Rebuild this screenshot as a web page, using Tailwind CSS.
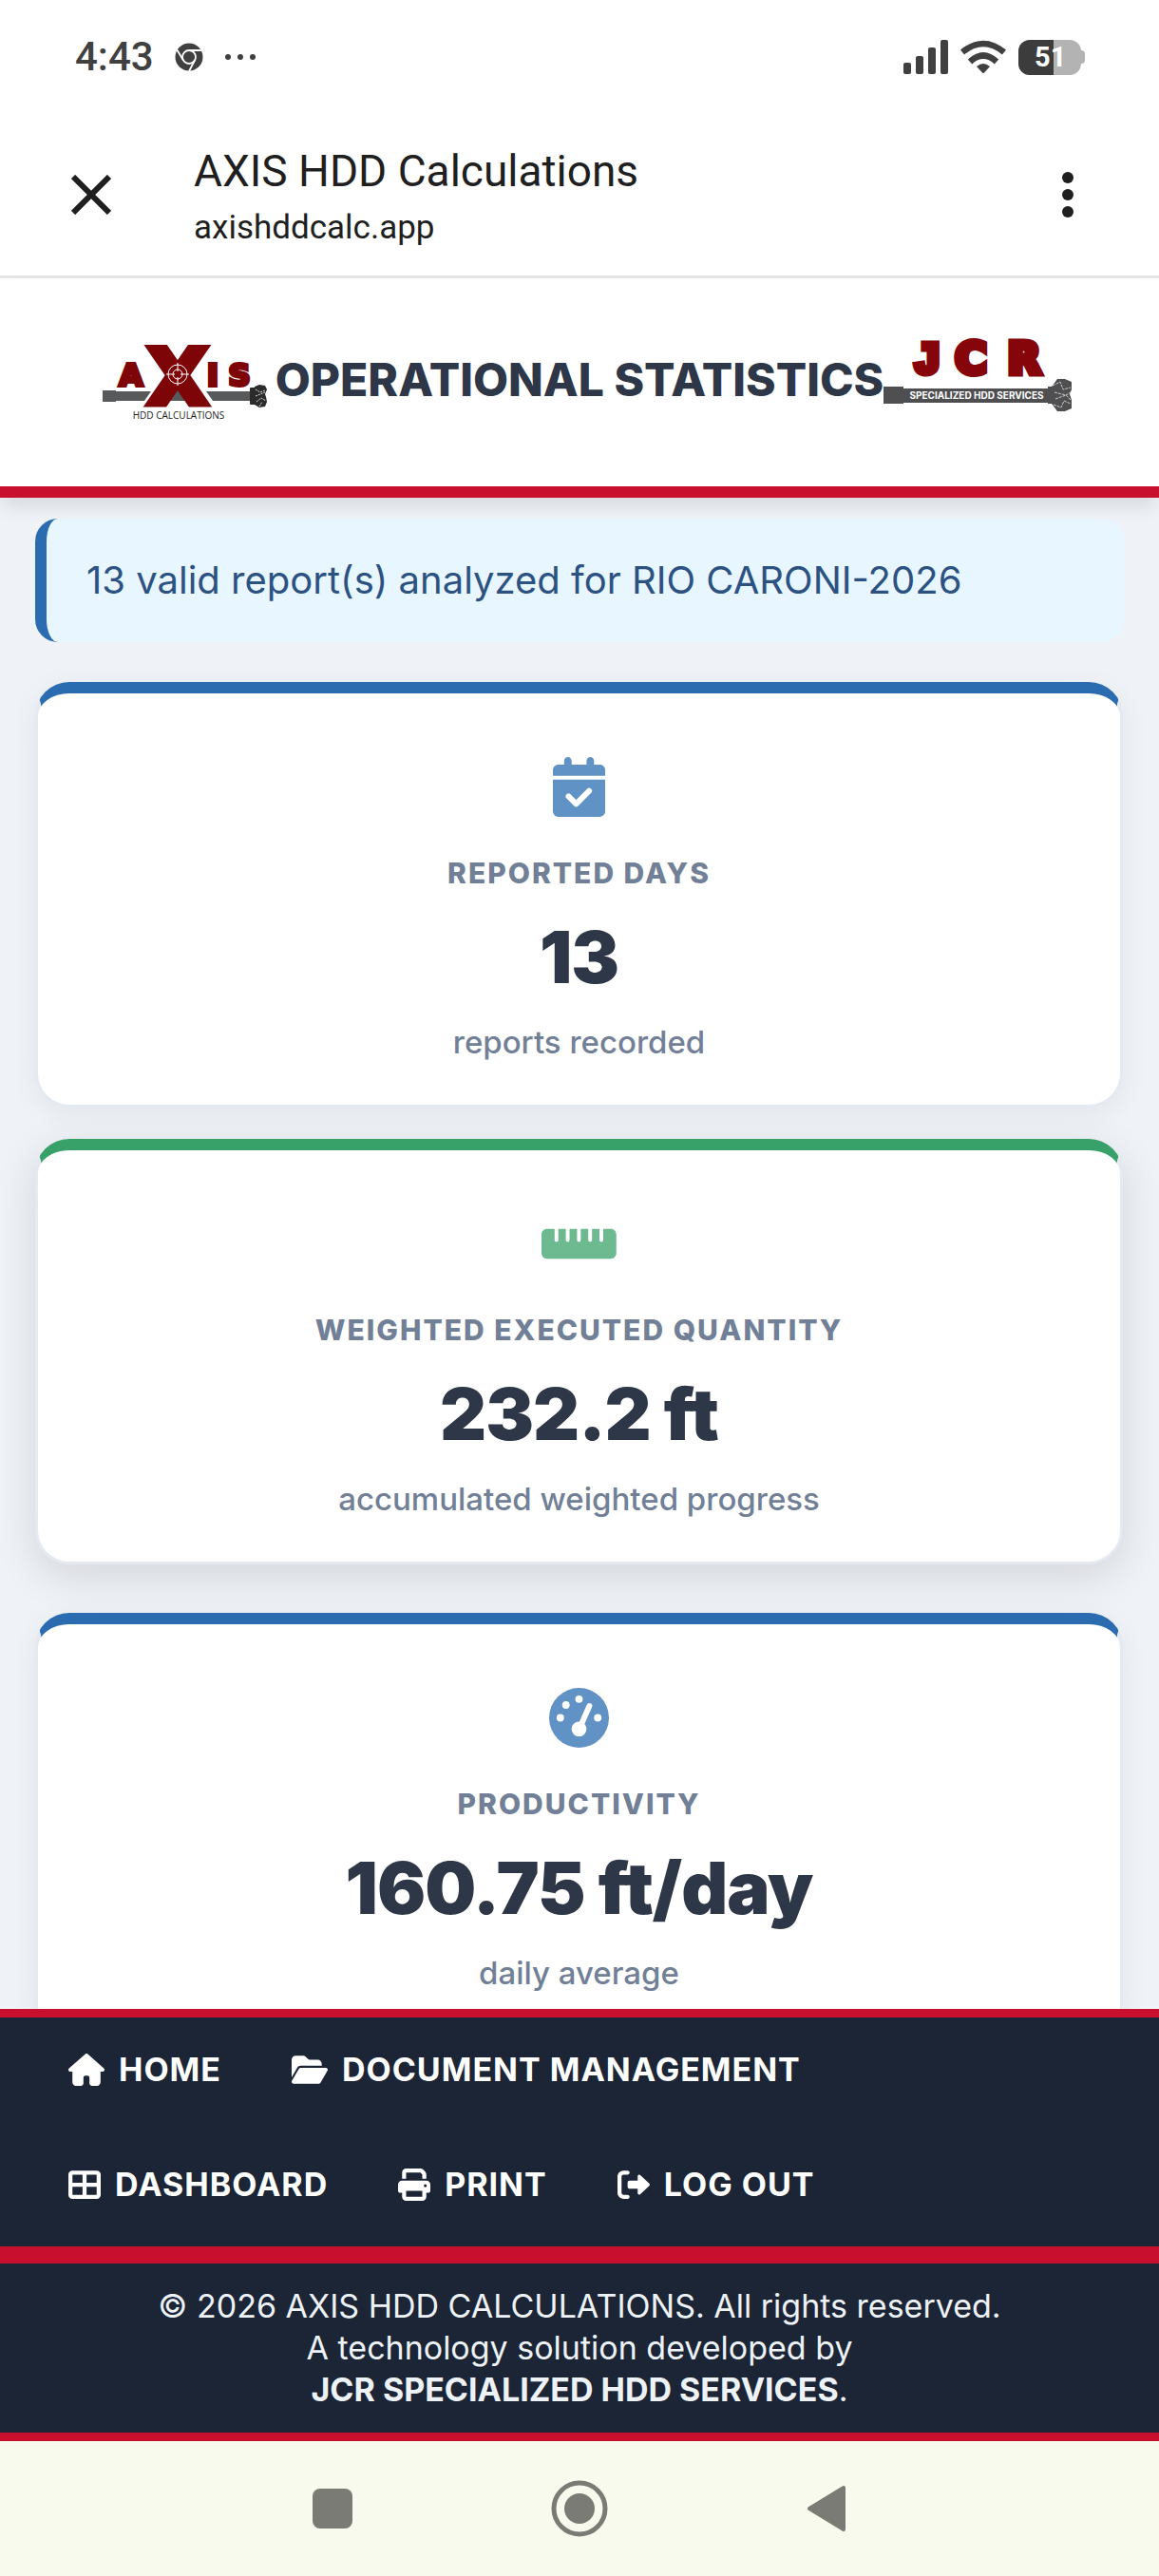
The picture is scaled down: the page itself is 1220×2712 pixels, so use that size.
<!DOCTYPE html>
<html lang="en">

<head>
    <meta charset="UTF-8">
    <meta name="viewport" content="width=device-width, initial-scale=1.0">
    <script src="https://cdn.jsdelivr.net/npm/@tailwindcss/browser@4"></script>
    <title>AXIS HDD Calculations</title>
</head>

<body class="flex h-screen flex-col overflow-hidden bg-[#eff2f7] font-['Inter',sans-serif] text-[#2d3748]">

    <!-- Status bar -->
    <div class="flex h-[120px] shrink-0 items-center justify-between bg-white pr-[78px] pl-[79px] font-['Roboto',sans-serif] text-[#404040]">
        <div class="flex items-center gap-[22px]">
            <span class="text-[42px] leading-none font-medium">4:43</span>
            <svg class="h-[30px] w-[30px]" viewBox="0 0 30 30">
                <circle cx="15" cy="15" r="14.5" fill="#404040"/>
                <g fill="none" stroke="#fff" stroke-width="1.8">
                    <circle cx="15" cy="15" r="7"/>
                    <path d="M15 8h14M9 18.5L2 7M21 18.5L15 30"/>
                </g>
            </svg>
            <svg class="h-[30px] w-[34px]" viewBox="0 0 34 30" fill="#404040">
                <circle cx="4" cy="15" r="3"/><circle cx="17" cy="15" r="3"/><circle cx="30" cy="15" r="3"/>
            </svg>
        </div>
        <div class="flex items-center gap-3">
            <svg class="h-[38px] w-[48px]" viewBox="0 0 48 38" fill="#404040">
                <rect x="1" y="25" width="8" height="12" rx="2"/>
                <rect x="14" y="18" width="8" height="19" rx="2"/>
                <rect x="27" y="9" width="8" height="28" rx="2"/>
                <rect x="40" y="1" width="8" height="36" rx="2"/>
            </svg>
            <svg class="h-[38px] w-[50px]" viewBox="0 0 50 38">
                <g fill="none" stroke="#404040" stroke-width="6.5">
                    <path d="M3 14Q25-4 47 14"/>
                    <path d="M11 24Q25 11 39 24"/>
                </g>
                <path d="M18 29q7-6 14 0l-6 6.500q-1 1-2 0z" fill="#404040"/>
            </svg>
            <div class="relative flex h-[37px] w-[70px] items-center">
                <div class="flex h-full w-[66px] overflow-hidden rounded-xl bg-[#b3b3b3]">
                    <div class="w-[37px] bg-[#3c3c3c]"></div>
                </div>
                <div class="h-[14px] w-1 rounded-r bg-[#b3b3b3]"></div>
                <span class="absolute inset-y-0 left-[17px] text-[29px] leading-[37px] font-bold text-white">51</span>
            </div>
        </div>
    </div>

    <!-- Browser tab bar -->
    <div class="flex h-[173px] shrink-0 items-center border-b-[3px] border-[#e6e6e6] bg-white pr-[84px] pl-[75px] font-['Roboto',sans-serif] text-[#1f1f1f]">
        <button type="button" aria-label="Close" class="h-[42px] w-[42px]">
            <svg viewBox="0 0 42 42" fill="none" stroke="#1f1f1f" stroke-width="6"><path d="M2 2l38 38M40 2L2 40"/></svg>
        </button>
        <div class="ml-[87px] flex flex-1 flex-col pt-[10px]">
            <span class="text-[46px] leading-[60px]">AXIS HDD Calculations</span>
            <span class="text-[35px] leading-[60px]">axishddcalc.app</span>
        </div>
        <button type="button" aria-label="More options" class="h-12 w-[24px]">
            <svg viewBox="0 0 24 48" fill="#1f1f1f"><circle cx="12" cy="6" r="6"/><circle cx="12" cy="24" r="6"/><circle cx="12" cy="42" r="6"/></svg>
        </button>
    </div>

    <!-- Page header -->
    <header class="relative z-10 flex h-[231px] shrink-0 items-center justify-center border-b-[12px] border-[#c8102e] bg-white pb-[5px] shadow-[0_12px_18px_-3px_rgba(0,0,0,0.1)]">
        <svg class="h-[120px] w-[200px]" viewBox="0 0 200 120" role="img" aria-label="AXIS HDD Calculations">
            <path d="M18 71h14v1h37l-7 10H32v1H18zM97 70l9 12H88zM127 72h48v10h-41z" fill="#58595b"/>
            <g fill="#2b2b2c">
                <rect x="173" y="68" width="6" height="18" rx="1"/>
                <path d="M178 67l5-2 6 1 2 4-2 5 1 3 1 5-2 5-6 1-5-3z"/>
            </g>
            <path d="M179 70l5 3 5-2M179 77l10-4M180 83l5-4 5 3M183 88l3-5" fill="none" stroke="#ddd" stroke-width="1" stroke-dasharray="2 1"/>
            <g fill="#7d0508" stroke="#7d0508" font-family="DejaVu Sans, sans-serif" font-weight="700" text-anchor="middle">
                <g font-size="32" stroke-width="4">
                    <text x="48" y="66">A</text>
                    <text x="134" y="66">I</text>
                    <text x="162" y="66">S</text>
                </g>
                <text x="97" y="85" font-size="81" stroke-width="7">X</text>
            </g>
            <g fill="none" stroke="#fff" stroke-width="1">
                <circle cx="97" cy="54" r="10"/><circle cx="97" cy="54" r="5"/>
                <path d="M97 42v9M97 57v9M85 54h9M100 54h9"/>
            </g>
            <text x="98" y="101" font-size="10" text-anchor="middle" font-family="Open Sans, sans-serif" fill="#222">HDD CALCULATIONS</text>
        </svg>
        <h1 class="text-[48px] leading-[60px] font-extrabold">OPERATIONAL STATISTICS</h1>
        <svg class="h-[120px] w-[200px]" viewBox="0 0 200 120" role="img" aria-label="JCR Specialized HDD Services">
            <g fill="#86050b" stroke="#86050b" stroke-width="7" font-size="45" font-family="DejaVu Sans, sans-serif" font-weight="700" text-anchor="middle">
                <text x="46" y="53" font-family="Liberation Sans, sans-serif">J</text>
                <text x="92" y="53">C</text>
                <text x="148" y="53">R</text>
            </g>
            <g fill="#4f4f51">
                <rect x="0" y="67" width="21" height="18"/>
                <rect x="20" y="69" width="155" height="15"/>
                <path d="M173 67h4l6-8 8 0 7 3v8l-2 5 2 6v9l-7 3h-8l-6-8h-4z"/>
            </g>
            <path d="M178 66l8-4 3 8 8-2M180 73l12 3 5-3M181 80l11-4 5 5M179 86l8 3 3-7 7 3" fill="none" stroke="#ccc" stroke-width="1" stroke-dasharray="3 1"/>
            <text x="98" y="80" font-size="10" font-weight="700" text-anchor="middle" font-family="Inter, sans-serif" fill="#fff">SPECIALIZED HDD SERVICES</text>
        </svg>
    </header>

    <!-- Statistics -->
    <main class="min-h-0 flex-1 overflow-hidden pt-[22px]">
        <p class="mr-[36px] ml-[37px] rounded-3xl border-l-[12px] border-[#2b6cb0] bg-[#e8f6ff] px-[42px] py-[35px] text-[40px] leading-[60px] text-[#2c5282]">13 valid report(s) analyzed for RIO CARONI-2026</p>

        <div class="mr-[38px] ml-[37px] mt-[42px] flex flex-col gap-[42px] text-center">
            <section class="flex flex-col items-center rounded-[36px] border-[3px] border-t-[12px] border-[#e5e9f1] border-t-[#2b6cb0] bg-white pt-[67px] pb-[46px] shadow-[0_6px_30px_rgba(0,0,0,0.06)]">
                <svg class="h-[63px] text-[#6092c5]" viewBox="0 0 448 512" fill="currentColor">
                    <path d="M128 0c17.700 0 32 14.300 32 32v32h128V32c0-17.700 14.300-32 32-32s32 14.300 32 32v32h48c26.500 0 48 21.500 48 48v48H0v-48c0-26.500 21.500-48 48-48h48V32c0-17.700 14.300-32 32-32zM0 192h448v272c0 26.500-21.500 48-48 48H48c-26.500 0-48-21.500-48-48z"/>
                    <path d="M134 336l65 65L310 290" fill="none" stroke="#fff" stroke-width="48" stroke-linecap="round" stroke-linejoin="round"/>
                </svg>
                <h2 class="mt-[41px] text-[30px] leading-[36px] font-extrabold tracking-[2px] text-[#718096]">REPORTED DAYS</h2>
                <p class="mt-7 text-[76px] leading-[84px] font-black tracking-[-1px]">13</p>
                <p class="mt-7 text-[33px] leading-[40px] font-medium text-[#718096]">reports recorded</p>
            </section>

            <section class="flex -translate-y-[9px] flex-col items-center rounded-[36px] border-[3px] border-t-[12px] border-[#e5e9f1] border-t-[#38a169] bg-white pt-[67px] pb-[46px] shadow-[0_12px_45px_rgba(0,0,0,0.12)]">
                <svg class="h-[63px] text-[#6db990]" viewBox="0 0 640 512" fill="currentColor">
                    <path d="M0 176c0-26.500 21.500-48 48-48h64v96a16 16 0 0 0 32 0v-96h64v96a16 16 0 0 0 32 0v-96h64v96a16 16 0 0 0 32 0v-96h64v96a16 16 0 0 0 32 0v-96h64v96a16 16 0 0 0 32 0v-96h64c26.500 0 48 21.500 48 48v160c0 26.500-21.500 48-48 48H48c-26.500 0-48-21.500-48-48z"/>
                </svg>
                <h2 class="mt-[41px] text-[30px] leading-[36px] font-extrabold tracking-[2px] text-[#718096]">WEIGHTED EXECUTED QUANTITY</h2>
                <p class="mt-7 text-[76px] leading-[84px] font-black tracking-[-1px]">232.2 ft</p>
                <p class="mt-7 text-[33px] leading-[40px] font-medium text-[#718096]">accumulated weighted progress</p>
            </section>

            <section class="flex flex-col items-center rounded-[36px] border-[3px] border-t-[12px] border-[#e5e9f1] border-t-[#2b6cb0] bg-white pt-[67px] pb-[46px] shadow-[0_6px_30px_rgba(0,0,0,0.06)]">
                <svg class="h-[63px] text-[#6092c5]" viewBox="0 0 512 512">
                    <circle cx="256" cy="256" r="256" fill="currentColor"/>
                    <g fill="#fff">
                        <circle cx="256" cy="96" r="32"/><circle cx="144" cy="146" r="32"/><circle cx="96" cy="256" r="32"/><circle cx="416" cy="256" r="32"/>
                        <circle cx="256" cy="352" r="64"/>
                    </g>
                    <path d="M265 335L345 154" stroke="#fff" stroke-width="48" stroke-linecap="round"/>
                </svg>
                <h2 class="mt-[41px] text-[30px] leading-[36px] font-extrabold tracking-[2px] text-[#718096]">PRODUCTIVITY</h2>
                <p class="mt-7 text-[76px] leading-[84px] font-black tracking-[-1px]">160.75 ft/day</p>
                <p class="mt-7 text-[33px] leading-[40px] font-medium text-[#718096]">daily average</p>
            </section>
        </div>
    </main>

    <!-- Navigation -->
    <nav class="relative z-10 flex shrink-0 flex-wrap gap-x-[74px] gap-y-[61px] border-y-[9px] border-[#c8102e] bg-[#1c2535] px-[72px] pt-[25px] pb-[35px] text-[34px] leading-[60px] font-bold tracking-[1px] text-white">
        <a href="#" class="flex items-center gap-[15px]">
            <svg class="h-[34px] w-[38px]" viewBox="0 0 576 512" fill="currentColor"><path d="M575.800 255.500c0 18-15 32.100-32 32.100h-32l.7 160.200c.2 36-26 64.200-56 64.200H376c-22 0-40-18-40-40v-88c0-17.700-14.300-32-32-32h-32c-17.700 0-32 14.300-32 32v88c0 22-18 40-40 40h-80c-30 0-56-26-56-56V287.600H32c-18 0-32-14-32-32.100 0-9 3-17 10-24L266.400 8c7-7 15-8 22-8s15 2 21 7l255.400 224.500c8 7 12 15 11 24z"/></svg>
            HOME
        </a>
        <a href="#" class="flex items-center gap-[15px]">
            <svg class="h-[34px] w-[38px]" viewBox="0 0 576 512" fill="currentColor"><path d="M88.700 223.800L0 375.800V96c0-35.300 28.700-64 64-64h117.500c17 0 33.300 6.700 45.300 18.700l26.500 26.500c12 12 28.300 18.700 45.300 18.700H416c35.300 0 64 28.700 64 64v32H144c-22.800 0-43.800 12.100-55.300 31.800zm27.600 16.100C122.100 230 132.600 224 144 224h400c11.500 0 22 6.100 27.700 16.100s5.700 22.200-.1 32.100l-112 192C453.900 474 443.400 480 432 480H32c-11.500 0-22-6.100-27.700-16.100s-5.700-22.200.1-32.100z"/></svg>
            DOCUMENT MANAGEMENT
        </a>
        <a href="#" class="flex items-center gap-[15px]">
            <svg class="h-[34px] w-[34px]" viewBox="0 0 512 512" fill="currentColor" fill-rule="evenodd"><path d="M64 32h384c35 0 64 29 64 64v320c0 35-29 64-64 64H64c-35 0-64-29-64-64V96c0-35 29-64 64-64zm0 64v128h160V96zm224 0v128h160V96zM64 288v128h160V288zm224 0v128h160V288z"/></svg>
            DASHBOARD
        </a>
        <button type="button" class="flex items-center gap-[15px] tracking-[1px]">
            <svg class="h-[34px] w-[34px]" viewBox="0 0 512 512" fill="currentColor" fill-rule="evenodd"><path d="M128 0C92.700 0 64 28.700 64 64v96h64V64h226.700L384 93.300V160h64V93.300c0-17-6.700-33.300-18.700-45.300L400 18.700C388 6.700 371.700 0 354.700 0zM384 352v96H128v-96zm64 32h32c17.700 0 32-14.300 32-32v-96c0-35.300-28.700-64-64-64H64c-35.300 0-64 28.700-64 64v96c0 17.700 14.300 32 32 32h32v64c0 35.300 28.700 64 64 64h256c35.300 0 64-28.700 64-64zM432 248a24 24 0 1 1 0 48 24 24 0 1 1 0-48z"/></svg>
            PRINT
        </button>
        <button type="button" class="flex items-center gap-[15px] tracking-[1px]">
            <svg class="h-[34px] w-[34px]" viewBox="0 0 512 512" fill="currentColor"><path d="M160 96c17.700 0 32-14.300 32-32s-14.300-32-32-32H96C43 32 0 75 0 128v256c0 53 43 96 96 96h64c17.700 0 32-14.300 32-32s-14.300-32-32-32H96c-17.700 0-32-14.300-32-32V128c0-17.700 14.300-32 32-32zm343 177c5-5 9-11 9-17s-4-13-9-17L362 107c-5-6-12-9-20-9-12 0-22 10-22 22v72H192c-18 0-32 14-32 32v64c0 18 14 32 32 32h128v72c0 12 10 22 22 22 8 0 15-3 20-9z"/></svg>
            LOG OUT
        </button>
    </nav>

    <!-- Footer -->
    <footer class="relative z-10 shrink-0 border-y-[9px] border-[#c8102e] bg-[#1c2535] py-[23px] text-center text-[34px] leading-[44px] text-[#edf2f7]">
        <p>© 2026 AXIS HDD CALCULATIONS. All rights reserved.</p>
        <p>A technology solution developed by</p>
        <p><strong class="font-bold">JCR SPECIALIZED HDD SERVICES</strong>.</p>
    </footer>

    <!-- System navigation -->
    <div class="flex h-[142px] shrink-0 items-center justify-center gap-[200px] bg-[#f8faed]">
        <button type="button" aria-label="Recent apps" class="h-[60px] w-[60px]">
            <svg viewBox="0 0 60 60" fill="#7a7b75"><rect x="9" y="9" width="42" height="42" rx="8"/></svg>
        </button>
        <button type="button" aria-label="Home" class="h-[60px] w-[60px]">
            <svg viewBox="0 0 60 60"><circle cx="30" cy="30" r="27" fill="none" stroke="#7a7b75" stroke-width="5"/><circle cx="30" cy="30" r="16" fill="#7a7b75"/></svg>
        </button>
        <button type="button" aria-label="Back" class="h-[60px] w-[60px]">
            <svg viewBox="0 0 60 60" fill="#7a7b75" stroke="#7a7b75" stroke-width="4" stroke-linejoin="round"><path d="M12 30L48 8v44z"/></svg>
        </button>
    </div>

</body>

</html>
